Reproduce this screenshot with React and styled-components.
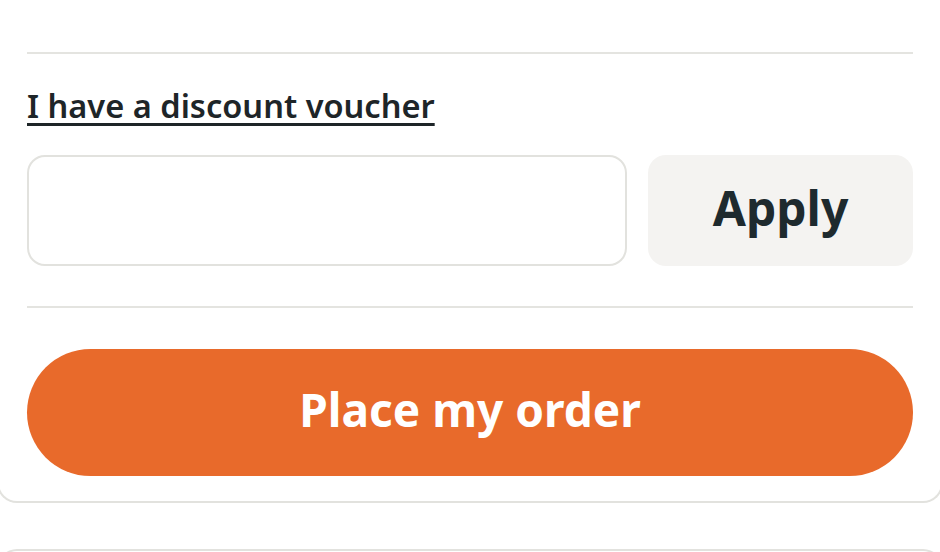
import styled, { createGlobalStyle } from "styled-components";

const GlobalStyle = createGlobalStyle`
    html, body {
        margin: 0;
        padding: 0;
        background: #ffffff;
        font-family: "Noto Sans", "Open Sans", sans-serif;
        color: #1e2528;
    }
`;

const Page = styled.div`
    width: 940px;
    height: 552px;
    overflow: hidden;
`;

const Card = styled.section`
    margin-left: -3px;
    margin-top: -20px;
    width: 946px;
    box-sizing: border-box;
    padding: 72px 28px 25px;
    background: #fff;
    border: 2px solid #e2e2de;
    border-top: none;
    border-radius: 0 0 20px 20px;
`;

const Divider = styled.hr`
    border: none;
    height: 2px;
    background: #e4e4e0;
    margin: 0;
`;

const Voucher = styled.div`
    padding: 36px 0 40px;
`;

const VoucherLink = styled.a`
    display: inline-block;
    font-size: 32.6px;
    font-weight: 600;
    line-height: 1;
    color: #1e2528;
    text-decoration: underline;
    text-decoration-thickness: 3px;
    text-underline-offset: 5px;
    cursor: pointer;
`;

const Row = styled.div`
    display: flex;
    gap: 21px;
    margin-top: 32px;
`;

const Input = styled.input`
    flex: 1;
    height: 111px;
    box-sizing: border-box;
    border: 2px solid #e2e2de;
    border-radius: 18px;
    font-size: 32px;
    padding: 0 24px;
    outline: none;
`;

const ApplyButton = styled.button`
    width: 265px;
    height: 111px;
    padding: 0 0 6px;
    border: none;
    border-radius: 18px;
    background: #f4f3f1;
    color: #1e2a2e;
    font-family: "Noto Sans", sans-serif;
    font-size: 48px;
    font-weight: 700;
    cursor: pointer;
`;

const OrderButton = styled.button`
    display: block;
    width: 100%;
    height: 127px;
    margin-top: 41px;
    padding: 0 0 8px;
    border: none;
    border-radius: 64px;
    background: #e86a2b;
    color: #fff;
    font-family: "Noto Sans", sans-serif;
    font-size: 46px;
    font-weight: 700;
    cursor: pointer;
`;

const NextCard = styled.div`
    margin: 46px -3px 0;
    height: 40px;
    border: 2px solid #e2e2de;
    border-bottom: none;
    border-radius: 20px 20px 0 0;
`;

export default function App() {
    return (
        <Page>
            <GlobalStyle />
            <Card>
                <Divider />
                <Voucher>
                    <VoucherLink>I have a discount voucher</VoucherLink>
                    <Row>
                        <Input type="text" />
                        <ApplyButton>Apply</ApplyButton>
                    </Row>
                </Voucher>
                <Divider />
                <OrderButton>Place my order</OrderButton>
            </Card>
            <NextCard />
        </Page>
    );
}
